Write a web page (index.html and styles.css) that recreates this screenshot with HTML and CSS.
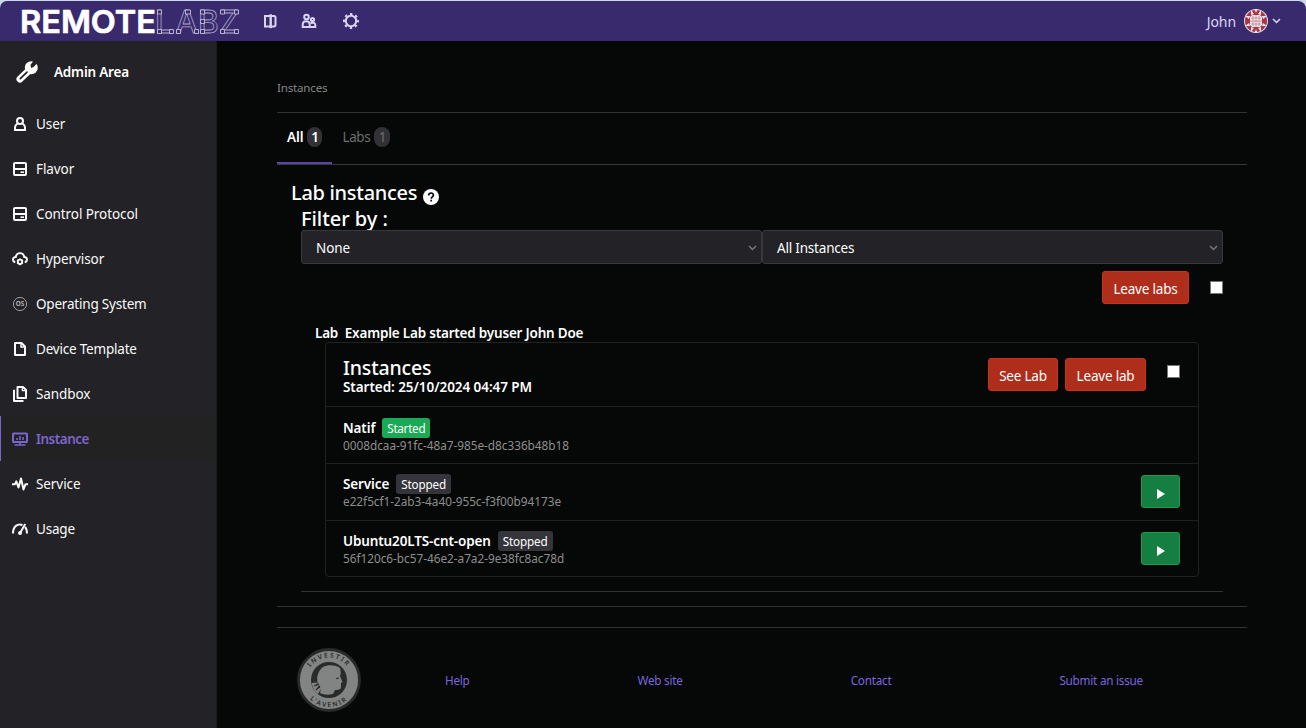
FILE: index.html
```
<!DOCTYPE html>
<html lang="en">
<head>
<meta charset="utf-8">
<title>Instances - RemoteLabz</title>
<link rel="stylesheet" href="styles.css">
</head>
<body>
<div class="topstrip">
<header class="navbar">
  <svg class="logo" width="222" height="32" viewBox="0 0 222 32" role="img">
    <text class="logo-remote" x="0" y="28" textLength="136" lengthAdjust="spacingAndGlyphs">REMOTE</text>
    <text class="logo-labz" y="28" x="135 155.500 178 199">LABZ</text>
    <g class="logo-nodes">
      <path d="M137.500 5h4v4h-4zM137.500 24.500h4v4h-4zM149.500 24.500h4v4h-4zM156.500 24.500h4v4h-4zM165.500 5h5v4h-5zM174.500 24.500h4v4h-4zM180.500 5h4v4h-4zM180.500 14.500h4v4h-4zM180.500 24.500h4v4h-4zM200.500 5h4v4h-4zM214.500 5h4v4h-4zM200.500 24.500h4v4h-4zM214.500 24.500h4v4h-4z"/>
    </g>
  </svg>
  <nav class="nav-icons">
    <svg width="16" height="18" viewBox="0 0 16 18"><path d="M8 4H3v10.500h5M8.500 4H12q1.500 0 1.500 1.500v7q0 2-1.500 2H8.500" fill="none" stroke="currentColor" stroke-width="2"/><path d="M8.700 2.200v14" stroke="currentColor" stroke-width="2.400"/></svg>
    <svg width="18" height="18" viewBox="0 0 18 18" fill="none" stroke="currentColor" stroke-width="2"><circle cx="6.500" cy="5" r="2.300"/><circle cx="12.500" cy="7.500" r="1.600"/><path d="M2.700 15v-2.500c0-4.500 7-4.500 7 0V15zM10 15h5.300v-2c0-2.500-3-3-4.500-1.500"/></svg>
    <svg width="18" height="18" viewBox="0 0 18 18" fill="none" stroke="currentColor"><circle cx="9" cy="9" r="5.200" stroke-width="2"/><circle cx="9" cy="9" r="7" stroke-width="2" stroke-dasharray="2.500 2.998" stroke-dashoffset="1.250"/></svg>
  </nav>
  <div class="account">
    <span>John</span>
    <svg width="24" height="24" viewBox="0 0 24 24"><circle cx="12" cy="12" r="12" fill="#e2dfe9"/><circle cx="12" cy="12" r="11" fill="#a83545"/><g fill="#ece5ea"><path d="M7 1l3 4-3 1zM17 1l-3 4 3 1zM7 23l3-4-3-1zM17 23l-3-4 3-1zM1 7l4 3 1-3zM1 17l4-3 1 3zM23 7l-4 3-1-3zM23 17l-4-3-1 3z"/><path d="M8 6h8l2 2v8l-2 2H8l-2-2V8z"/><path d="M10.500 0h3l-1.500 4zM10.500 24h3l-1.500-4z"/></g><path d="M12 6v12M6 12h12M9 7v10M15 7v10M7 9h10M7 15h10" stroke="#c98693" stroke-width=".8"/></svg>
    <svg width="9" height="6" viewBox="0 0 9 6"><path d="M1 1l3.500 3.500L8 1" fill="none" stroke="currentColor" stroke-width="1.500"/></svg>
  </div>
</header>
</div>

<div class="layout">
  <aside class="sidebar">
    <div class="sidebar-title">
      <svg width="22" height="22" viewBox="0 0 22 22" fill="none" stroke-linecap="round"><path d="M4 18L14 8.500" stroke="#fff" stroke-width="7"/><circle cx="15.300" cy="6.700" r="6.500" fill="#fff"/><path d="M15 7l2.500-1 4.500-4.500L18-1l-3.500 5z" fill="#232227"/><path d="M4.300 17.700L11 11.200" stroke="#232227" stroke-width="1.700"/></svg>
      <span>Admin Area</span>
    </div>
    <a class="item"><svg width="16" height="16" viewBox="0 0 16 16" fill="none" stroke="currentColor" stroke-width="2"><circle cx="8" cy="5" r="3"/><path d="M5.500 7.500C4 8.500 3 9.500 3 11.500V14h10v-2.500c0-2-1-3-2.500-4"/></svg><span>User</span></a>
    <a class="item"><svg width="16" height="16" viewBox="0 0 16 16" fill="none" stroke="currentColor" stroke-width="2"><rect x="2" y="2" width="12" height="12" rx="1"/><path d="M2 8h12"/><path d="M8.500 11.200h3.500" stroke-width="1.600"/></svg><span>Flavor</span></a>
    <a class="item"><svg width="16" height="16" viewBox="0 0 16 16" fill="none" stroke="currentColor" stroke-width="2"><rect x="2" y="2" width="12" height="12" rx="1"/><path d="M2 8h12"/><path d="M8.500 11.200h3.500" stroke-width="1.600"/></svg><span>Control Protocol</span></a>
    <a class="item"><svg width="16" height="16" viewBox="0 0 16 16" fill="none" stroke="currentColor"><path d="M3.200 11.500C-.5 9.500 1 6 3.800 6 4.500 .8 11.500 .8 12.200 6c2.800 0 4.300 3.500.6 5.500" stroke-width="1.900"/><circle cx="8" cy="10.800" r="2.200" stroke-width="1.900"/><path d="M8 7.500v1.500M8 12.800v1.500M5 9.200l1.200.7M11 9.200l-1.200.7M5 12.500l1.200-.7M11 12.500l-1.200-.7" stroke-width="1.400"/></svg><span>Hypervisor</span></a>
    <a class="item"><svg width="16" height="16" viewBox="0 0 16 16"><circle cx="8" cy="8" r="6.600" fill="none" stroke="#aaa9ac" stroke-width=".9"/><text class="os-mark" x="3.800" y="10.300" textLength="8.500" lengthAdjust="spacingAndGlyphs">OS</text></svg><span class="snug">Operating System</span></a>
    <a class="item"><svg width="16" height="16" viewBox="0 0 16 16" fill="none" stroke="currentColor" stroke-width="2"><path d="M3 2h6.500l3.500 3.500V14H3z" stroke-linejoin="round"/><path d="M9 2v4h4" stroke-width="1.500"/></svg><span class="snug">Device Template</span></a>
    <a class="item"><svg width="16" height="16" viewBox="0 0 16 16" fill="none" stroke="currentColor" stroke-width="2" stroke-linejoin="round"><path d="M5.500 1h5.500l3 3v8H5.500z"/><path d="M10.300 1v3.600H14" stroke-width="1.300"/><path d="M2 3.800V15h9.500"/></svg><span>Sandbox</span></a>
    <a class="item active"><svg width="16" height="16" viewBox="0 0 16 16" fill="none" stroke="currentColor" stroke-width="2"><rect x="1" y="2.500" width="14" height="8.500" rx=".6"/><path d="M8 11v3M2.500 14h11" stroke-width="1.600"/><path d="M5 7v2M8 5v4M11 6v3" stroke-width="1.600"/></svg><span>Instance</span></a>
    <a class="item"><svg width="16" height="16" viewBox="0 0 16 16" fill="none" stroke="currentColor" stroke-width="2"><path d="M0 8.200h3l1.300-2.800 2.200 6L9 2.500l2.500 11 2-5.300H16" stroke-linejoin="round"/></svg><span>Service</span></a>
    <a class="item"><svg width="16" height="16" viewBox="0 0 16 16" fill="none" stroke="currentColor" stroke-width="2"><path d="M1 12.500C1 5 5.500 2.500 10.500 4M13 6c1.500 1.500 2 3.500 2 6.500"/><path d="M8 12.200L13.200 3" stroke-width="1.900"/><circle cx="8" cy="12" r="2" fill="currentColor" stroke="none"/></svg><span class="snug">Usage</span></a>
  </aside>

  <main class="content">
    <div class="breadcrumb">Instances</div>
    <div class="tabs">
      <a class="tab selected">All <span class="count">1</span></a>
      <a class="tab">Labs <span class="count">1</span></a>
    </div>
    <section class="labs">
      <h2 class="title">Lab instances <svg width="16" height="16" viewBox="0 0 16 16"><circle cx="8" cy="8" r="8" fill="#fff"/><path d="M5.700 6.500c0-3.300 4.700-3.200 4.700-.3 0 1.700-2.200 1.700-2.200 3.600M8.200 10.800v1.700" fill="none" stroke="#070808" stroke-width="1.700"/></svg></h2>
      <div class="panel">
        <h2 class="subtitle">Filter by :</h2>
        <div class="filters">
          <div class="select">None<svg width="9" height="6" viewBox="0 0 9 6"><path d="M1 1l3.500 3.500L8 1" fill="none" stroke="#77777b" stroke-width="1.500"/></svg></div>
          <div class="select snug">All Instances<svg width="9" height="6" viewBox="0 0 9 6"><path d="M1 1l3.500 3.500L8 1" fill="none" stroke="#77777b" stroke-width="1.500"/></svg></div>
        </div>
        <div class="bulk"><button class="btn danger leave-all">Leave labs</button><span class="check"></span></div>
        <div class="lab-name">Lab&nbsp; Example Lab started byuser John Doe</div>
        <div class="card">
          <div class="card-head">
            <div><h3>Instances</h3><div class="started">Started: 25/10/2024 04:47 PM</div></div>
            <div class="actions"><button class="btn danger see">See Lab</button><button class="btn danger leave">Leave lab</button><span class="check"></span></div>
          </div>
          <div class="row">
            <div><div class="name">Natif <span class="badge on">Started</span></div><div class="uuid">0008dcaa-91fc-48a7-985e-d8c336b48b18</div></div>
          </div>
          <div class="row">
            <div><div class="name">Service <span class="badge">Stopped</span></div><div class="uuid">e22f5cf1-2ab3-4a40-955c-f3f00b94173e</div></div>
            <button class="btn play"><svg width="8" height="10" viewBox="0 0 8 10"><path d="M0 0l8 5-8 5z" fill="#fff"/></svg></button>
          </div>
          <div class="row last">
            <div><div class="name">Ubuntu20LTS-cnt-open <span class="badge">Stopped</span></div><div class="uuid">56f120c6-bc57-46e2-a7a2-9e38fc8ac78d</div></div>
            <button class="btn play"><svg width="8" height="10" viewBox="0 0 8 10"><path d="M0 0l8 5-8 5z" fill="#fff"/></svg></button>
          </div>
        </div>
      </div>
    </section>
    <footer class="footer">
      <svg class="seal" width="64" height="64" viewBox="0 0 64 64">
        <defs><path id="arc-top" d="M9.500 32a22.500 22.500 0 0 1 45 0"/><path id="arc-bottom" d="M5 32a27 27 0 0 0 54 0"/></defs>
        <circle cx="32" cy="32" r="30.500" fill="#828383" stroke="#292b2b" stroke-width="2.800"/>
        <circle cx="32" cy="32" r="18" fill="#292b2b"/>
        <path d="M23 45c1-3 1-5-2-9-2-7 0-13 5-17 5-3 14-2 17 1 1 4 1 6 0 8l2.500 6-1.500 1v4c0 3-4 3-6 3l-2 4c-5 1-9 1-13-1z" fill="#828383"/>
        <path d="M14.500 35l6.500-.5-3 3 4-.5-2 4 5-2-4 7c-3-2-5.500-6-6.500-11z" fill="#828383"/>
        <path d="M17 38l5-2M19 42l4-4M39 30.500l3-.5" stroke="#292b2b" stroke-width="1.200"/>
        <text class="seal-text"><textPath href="#arc-top" startOffset="50%" text-anchor="middle">INVESTIR</textPath></text>
        <text class="seal-text"><textPath href="#arc-bottom" startOffset="50%" text-anchor="middle">L'AVENIR</textPath></text>
      </svg>
      <nav class="links"><a>Help</a><a>Web site</a><a>Contact</a><a>Submit an issue</a></nav>
    </footer>
  </main>
</div>
</body>
</html>
```
FILE: styles.css
```
* { box-sizing: border-box; }
body {
  margin: 0;
  height: 728px;
  overflow: hidden;
  background: #060807;
  color: #fff;
  font: 13.5px/20px "Noto Sans", sans-serif;
  letter-spacing: -0.08px;
}
h2, h3 { margin: 0; font-weight: 550; }
svg { display: block; flex: none; overflow: visible; }
.snug { letter-spacing: -0.2px; }

.topstrip { height: 41px; padding-top: 1px; background: #ccd8e8; }
.navbar {
  display: flex;
  align-items: center;
  height: 40px;
  padding: 0 25px 0 20px;
  background: #382a6d;
  border-radius: 7px 8px 0 0;
}
.logo-remote { font: 600 31.500px "Inter", sans-serif; letter-spacing: 0; fill: #fff; stroke: #fff; stroke-width: .7px; stroke-linejoin: round; }
.logo-labz { font: 500 31.500px "Inter", sans-serif; letter-spacing: 0; fill: none; stroke: #aaa2c8; stroke-width: .8px; }
.logo-nodes { fill: #382a6d; stroke: #d5d0e5; stroke-width: .8px; }
.nav-icons { display: flex; gap: 24px; margin-left: 20px; color: #dad4f7; }
.nav-icons svg:first-child { margin-right: -2px; }
.account { display: flex; align-items: center; margin-left: auto; color: #dcd6f5; font-size: 14px; }
.account span { padding-top: 2px; }
.account svg { margin-left: 8px; }
.account svg:last-child { margin-left: 4px; }

.layout { display: flex; height: 687px; }
.sidebar { width: 217px; flex: none; background: #232227; border-right: 1px solid #1b1b1e; }
.sidebar-title {
  display: flex;
  align-items: center;
  height: 60px;
  padding: 2px 0 0 16px;
  gap: 16px;
  font-weight: 600;
  letter-spacing: -0.2px;
}
.item { display: flex; align-items: center; gap: 8px; height: 45px; padding-left: 12px; color: #fafafa; }
.item.active {
  padding-left: 11px;
  border-left: 1px solid #7b64cf;
  background: #222222;
  color: #7b64cf;
  font-weight: 600;
  letter-spacing: -0.5px;
}
.os-mark { font: 600 6.5px "Noto Sans", sans-serif; letter-spacing: 0; fill: #c4c4c6; }

.content { width: 970px; margin-left: 60px; }
.breadcrumb {
  height: 72px;
  padding-top: 37px;
  border-bottom: 1px solid #323234;
  color: #858585;
  font-size: 11.6px;
  letter-spacing: -0.2px;
}
.tabs { display: flex; height: 52px; border-bottom: 1px solid #38373c; }
.tab { display: flex; align-items: flex-start; gap: 4px; padding: 14px 10px 0; color: #6d6d6f; letter-spacing: -0.4px; }
.tab.selected { border-bottom: 2px solid #5a45a6; color: #fff; font-weight: 600; letter-spacing: -0.08px; }
.count { width: 16px; background: #323136; border-radius: 10px; text-align: center; }
.tab.selected .count { width: 15px; }

.labs { height: 442px; padding: 15px 24px 0 14px; border-bottom: 1px solid #323234; }
.title { display: flex; align-items: center; gap: 6px; height: 25px; font-size: 20px; letter-spacing: -0.3px; }
.title svg { margin-top: 9px; }
.panel { height: 387px; margin-left: 10px; border-bottom: 1px solid #323234; }
.subtitle { height: 25px; font-size: 20px; line-height: 27px; letter-spacing: -0.05px; }
.filters { display: grid; grid-template-columns: 1fr 1fr; }
.select {
  display: flex;
  align-items: center;
  justify-content: space-between;
  height: 34px;
  padding: 2px 4px 0 14px;
  background: #232227;
  border: 1px solid #39383d;
  border-radius: 3px;
}
.bulk { display: flex; justify-content: flex-end; margin-top: 7px; gap: 21px; }
.check { width: 13px; height: 13px; background: #fff; border: 1px solid #767676; }
.bulk .check { margin-top: 10px; }
.btn {
  display: flex;
  align-items: center;
  justify-content: center;
  height: 33px;
  padding: 2px 0 0;
  border: 1px solid;
  border-radius: 3px;
  color: #fff;
  font: inherit;
  letter-spacing: -0.2px;
}
.danger { background: #ae2e1b; border-color: #c8321c; }
.leave-all { width: 87px; }
.see { width: 70px; }
.leave { width: 81px; margin-left: 7px; }
.lab-name { margin: 19px 0 0 14px; height: 19px; font-weight: 600; letter-spacing: -0.2px; }

.card { width: 874px; height: 235px; margin-left: 24px; border: 1px solid #202222; border-radius: 4px; }
.card-head { display: flex; justify-content: space-between; height: 64px; padding: 15px 18px 0 17px; border-bottom: 1px solid #202222; }
.card-head h3 { font-size: 19.500px; line-height: 20px; letter-spacing: -0.15px; }
.started { font-weight: 600; line-height: 18px; letter-spacing: -0.06px; }
.actions { display: flex; }
.actions .check { margin: 7px 0 0 21px; }
.row { display: flex; justify-content: space-between; height: 57px; padding: 11px 18px 0 17px; border-bottom: 1px solid #202222; }
.row.last { border-bottom: 0; }
.name { display: flex; gap: 7px; height: 19px; font-weight: 600; letter-spacing: -0.13px; }
.row + .row .name { margin-top: -1px; }
.badge { height: 20px; padding: 0 5px; background: #35343a; border-radius: 3px; font-size: 11.700px; font-weight: 400; line-height: 21px; letter-spacing: -0.15px; }
.badge.on { background: #1aaa55; letter-spacing: -0.28px; }
.uuid { color: #8e8e8e; font-size: 11.800px; line-height: 16px; letter-spacing: -0.02px; }
.play { width: 39px; background: #157f41; border-color: #1b9a50; padding-top: 4px; }

.footer { display: flex; align-items: center; height: 104px; margin-top: 20px; padding: 0 20px; border-top: 1px solid #323234; }
.seal-text { font: 600 6.500px "Noto Sans", sans-serif; letter-spacing: 1.800px; fill: #292b2b; }
.links { display: flex; flex: 1; justify-content: space-around; padding-top: 1px; color: #7b64df; font-size: 11.700px; letter-spacing: -0.22px; }
```
